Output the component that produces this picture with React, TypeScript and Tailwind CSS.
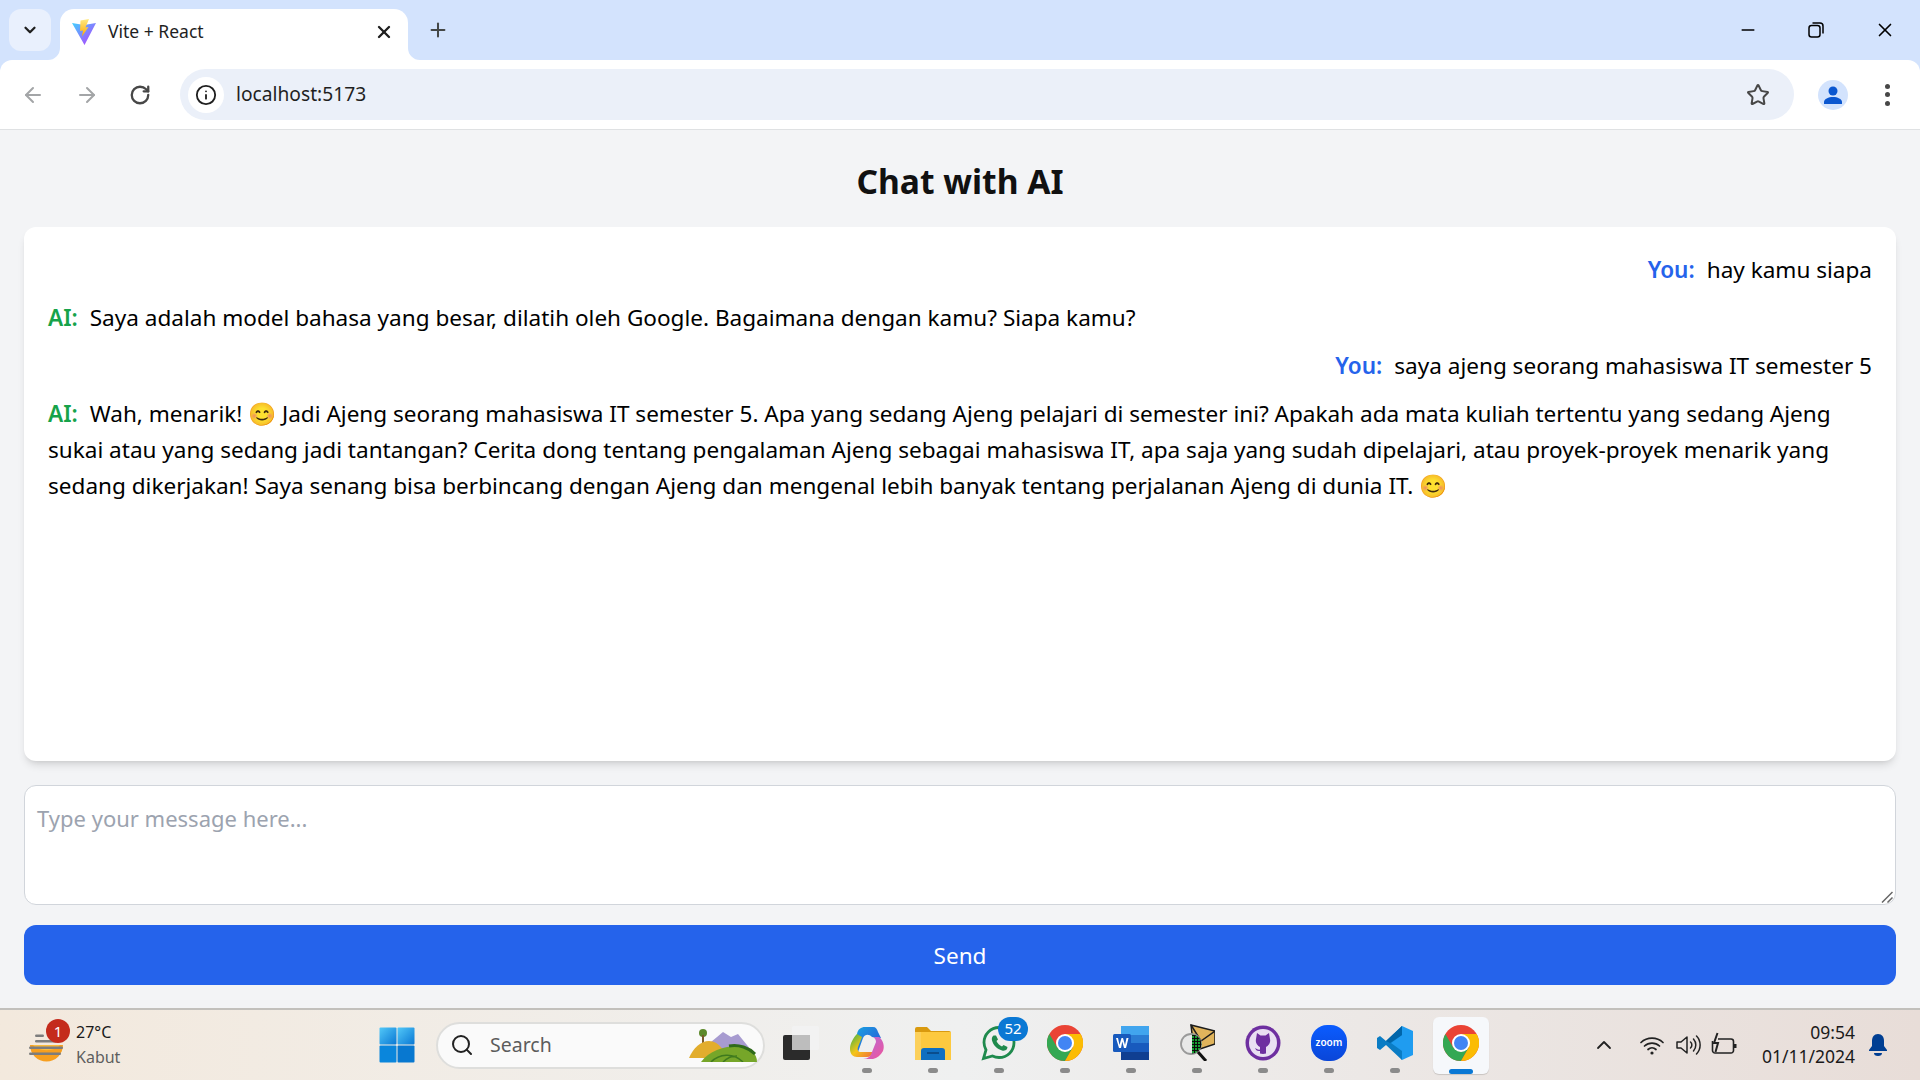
import React from "react";
import { X, Plus, ChevronDown, ArrowLeft, ArrowRight, RotateCw, Info, Star, Search, Minus, ChevronUp } from "lucide-react";

const uiFont = "font-['Noto_Sans',sans-serif]";

function ViteLogo() {
  return (
    <svg width="24" height="28" viewBox="0 0 24 28" className="shrink-0">
      <defs>
        <linearGradient id="viteA" x1="0" y1="0" x2="1" y2="1">
          <stop offset="0" stopColor="#41d1ff" />
          <stop offset="1" stopColor="#bd34fe" />
        </linearGradient>
        <linearGradient id="viteB" x1="0" y1="0" x2="0" y2="1">
          <stop offset="0" stopColor="#ffea83" />
          <stop offset="1" stopColor="#ffa800" />
        </linearGradient>
      </defs>
      <path d="M0 5L12 7L24 5L12.500 27Z" fill="url(#viteA)" />
      <path d="M17 1L8.500 2.500L8 13L11 12.500L10 18.500L16.500 9L13.500 9.500Z" fill="url(#viteB)" />
    </svg>
  );
}

function ChromeIcon({ size = 36 }: { size?: number }) {
  return (
    <svg width={size} height={size} viewBox="0 0 36 36">
      <circle cx="18" cy="18" r="18" fill="#ea4335" />
      <path d="M2.400 9L10.200 22.500L18 27L25.800 22.500L18 36A18 18 0 0 1 2.400 9Z" fill="#34a853" />
      <path d="M18 9H33.600A18 18 0 0 1 18 36L25.800 22.500Z" fill="#fbbc04" />
      <circle cx="18" cy="18" r="9" fill="#fff" />
      <circle cx="18" cy="18" r="7" fill="#4285f4" />
    </svg>
  );
}

function WindowsLogo() {
  return (
    <svg width="36" height="36" viewBox="0 0 36 36" className="shrink-0">
      <defs>
        <linearGradient id="winA" x1="0" y1="0" x2="1" y2="1">
          <stop offset="0" stopColor="#52c8f8" />
          <stop offset="1" stopColor="#0a78d4" />
        </linearGradient>
      </defs>
      <rect x="0.500" y="0.500" width="17" height="17" rx="1" fill="url(#winA)" />
      <rect x="18.500" y="0.500" width="17" height="17" rx="1" fill="url(#winA)" />
      <rect x="0.500" y="18.500" width="17" height="17" rx="1" fill="#0a86dc" />
      <rect x="18.500" y="18.500" width="17" height="17" rx="1" fill="#0878d0" />
    </svg>
  );
}

function TaskIcon({ children, dot = true, active = false }: { children: React.ReactNode; dot?: boolean; active?: boolean }) {
  return (
    <div className="relative flex h-[57px] w-[66px] shrink-0 items-center justify-center pb-[5px]">
      {active && <span className="absolute inset-y-0 left-[5px] w-[56px] rounded-md bg-[#f6f8fb] shadow-[0_1px_1px_rgba(0,0,0,0.15)]" />}
      <div className="relative flex">{children}</div>
      {dot && !active && <span className="absolute bottom-[1px] left-[28px] h-[5px] w-[10px] rounded-full bg-[#8b8b8b]" />}
      {active && <span className="absolute bottom-0 left-[21px] h-[5px] w-[24px] rounded-full bg-[#0a78d4]" />}
    </div>
  );
}

function BrowserChrome() {
  return (
    <header className={`shrink-0 bg-[#d3e3fd] ${uiFont}`}>
      <div className="flex h-[60px] items-end">
        <div className="mb-[9px] ml-[9px] flex h-[42px] w-[42px] items-center justify-center rounded-[12px] bg-[#e9f0fd]">
          <ChevronDown size={18} strokeWidth={3} className="text-[#1f1f1f]" />
        </div>
        <div className="relative ml-[9px] flex h-[51px] w-[348px] items-center rounded-t-[14px] bg-white pb-[6px] pl-[12px] pr-[14px]">
          <svg width="12" height="12" viewBox="0 0 12 12" className="absolute bottom-0 left-[-12px]">
            <path d="M12 0A12 12 0 0 1 0 12H12Z" fill="#fff" />
          </svg>
          <svg width="12" height="12" viewBox="0 0 12 12" className="absolute bottom-0 right-[-12px]">
            <path d="M0 0A12 12 0 0 0 12 12H0Z" fill="#fff" />
          </svg>
          <ViteLogo />
          <span className="ml-[12px] flex-1 text-[17.500px] text-[#1f1f1f]">Vite + React</span>
          <X size={20} strokeWidth={2.800} className="text-[#1f1f1f]" />
        </div>
        <div className="mb-[19px] ml-[19px] flex h-[22px] w-[22px] items-center justify-center">
          <Plus size={24} strokeWidth={2.200} className="text-[#444746]" />
        </div>
        <div className="mb-[19px] ml-auto flex items-center gap-[50px] pr-[24px] text-black">
          <Minus size={20} strokeWidth={1.800} />
          <svg width="16" height="16" viewBox="0 0 16 16" fill="none" stroke="currentColor" strokeWidth="1.500">
            <rect x="1" y="3.500" width="11" height="11.500" rx="2.500" />
            <path d="M4.500 1h7.500a3 3 0 0 1 3 3v7.500" />
          </svg>
          <X size={22} strokeWidth={1.800} />
        </div>
      </div>
      <div className="flex h-[70px] items-center rounded-t-[12px] border-b border-[#dfe1e3] bg-white pr-[30px]">
        <div className="flex items-center gap-[30px] pl-[21px] text-[#a3a5a7]">
          <ArrowLeft size={24} strokeWidth={2} />
          <ArrowRight size={24} strokeWidth={2} />
          <RotateCw size={22} strokeWidth={2.500} className="text-[#474747]" />
        </div>
        <div className="ml-[29px] flex h-[51px] flex-1 items-center rounded-full bg-[#ebf0f9] pl-[8px] pr-[24px]">
          <div className="flex h-[36px] w-[36px] items-center justify-center rounded-full bg-white">
            <Info size={22} strokeWidth={2} className="text-[#1f1f1f]" />
          </div>
          <span className="ml-[12px] flex-1 text-[19.200px] text-[#1f1f1f]">localhost:5173</span>
          <Star size={24} strokeWidth={2} className="text-[#474747]" />
        </div>
        <div className="ml-[24px] flex h-[30px] w-[30px] items-center justify-center rounded-full bg-[#d3e3fd]">
          <svg width="20" height="20" viewBox="0 0 20 20" fill="#0b57d0">
            <circle cx="10" cy="6" r="4.500" />
            <path d="M1 19v-2c0-3 4.500-5 9-5s9 2 9 5v2Z" />
          </svg>
        </div>
        <div className="ml-[37px] flex flex-col gap-[3.500px]">
          <span className="h-[5px] w-[5px] rounded-full bg-[#474747]" />
          <span className="h-[5px] w-[5px] rounded-full bg-[#474747]" />
          <span className="h-[5px] w-[5px] rounded-full bg-[#474747]" />
        </div>
      </div>
    </header>
  );
}

function Taskbar() {
  return (
    <footer className={`flex h-[72px] shrink-0 items-center border-t-2 border-[#c2c0bc] bg-gradient-to-r from-[#f3e9dd] via-[#eff0f0] to-[#e8ddd8] ${uiFont}`}>
      <div className="relative flex w-[379px] shrink-0 items-center pl-[29px]">
        <svg width="36" height="28" viewBox="0 0 36 28" className="mt-[6px] shrink-0">
          <path d="M1 11h33a16.500 16.500 0 0 1-33 0Z" fill="#f79f1f" />
          <path d="M4 11h27a14 7 0 0 1-27 0Z" fill="#fbbb3c" />
          <g fill="#7d7d7d">
            <rect x="6" y="0.500" width="9" height="2.500" rx="1.200" />
            <rect x="6" y="6" width="22" height="2.500" rx="1.200" />
            <rect x="0" y="12.500" width="34" height="2.500" rx="1.200" />
            <rect x="0" y="18.500" width="32" height="2.500" rx="1.200" />
          </g>
        </svg>
        <span className="absolute left-[46px] top-[-1px] flex h-[24px] w-[24px] items-center justify-center rounded-full bg-[#c42b1c] text-[15px] text-white">1</span>
        <div className="ml-[11px] leading-[25px]">
          <div className="text-[16px] text-[#1a1a1a]">27°C</div>
          <div className="text-[16px] text-[#5e5e5e]">Kabut</div>
        </div>
      </div>
      <WindowsLogo />
      <div className="ml-[21px] flex h-[47px] w-[329px] shrink-0 items-center rounded-full border-2 border-[#dededc] bg-[#fafafa] pl-[12px] pr-[6px]">
        <Search size={24} strokeWidth={2} className="text-[#222]" />
        <span className="ml-[16px] flex-1 text-[19.500px] text-[#5c5c5c]">Search</span>
        <svg width="68" height="34" viewBox="0 0 68 34">
          <path d="M22 14L34 4L42 9L49 6L62 22H22Z" fill="#a79bd0" />
          <circle cx="14" cy="5" r="4" fill="#5d8a2b" />
          <rect x="13" y="7" width="2" height="8" fill="#7a5a2a" />
          <path d="M0 30C4 20 12 13 20 13C30 13 36 24 38 30Z" fill="#e2ad2d" />
          <path d="M12 34C20 22 38 17 52 18C62 20 68 26 68 34Z" fill="#76a629" />
          <path d="M40 18C50 16 60 20 66 26" stroke="#2f6b1a" strokeWidth="3" fill="none" />
          <path d="M22 34C30 26 44 24 54 34M34 34C38 30 44 28 48 28" stroke="#3f7a1e" strokeWidth="1.500" fill="none" />
        </svg>
      </div>
      <div className="ml-[3px] flex items-center">
        <TaskIcon dot={false}>
          <svg width="36" height="34" viewBox="0 0 36 34">
            <rect x="0" y="9" width="27" height="25" rx="2" fill="#2b2b2b" />
            <rect x="9" y="0" width="27" height="24" rx="2" fill="#f2f2f2" />
            <rect x="9" y="9" width="18" height="15" fill="#bdbdbd" />
          </svg>
        </TaskIcon>
        <TaskIcon>
          <svg width="36" height="34" viewBox="0 0 36 34">
            <defs>
              <linearGradient id="copA" x1="0" y1="0" x2="1" y2="1">
                <stop offset="0" stopColor="#19a3e0" />
                <stop offset="1" stopColor="#2c4fd8" />
              </linearGradient>
              <linearGradient id="copB" x1="0" y1="0" x2="1" y2="1">
                <stop offset="0" stopColor="#37b34a" />
                <stop offset="0.500" stopColor="#f5c518" />
                <stop offset="1" stopColor="#ef6c3a" />
              </linearGradient>
              <linearGradient id="copC" x1="0" y1="0" x2="1" y2="1">
                <stop offset="0" stopColor="#b06be0" />
                <stop offset="1" stopColor="#f0569a" />
              </linearGradient>
            </defs>
            <path d="M8 8C9 3 12 1 16 1H24C27 1 28 3 29 6L32 12L23 11C20 8 16 8 14 12L9 26C6 22 6 15 8 8Z" fill="url(#copA)" />
            <path d="M8 8C4 12 1 18 1 23C1 28 4 31 8 31H18C21 31 23 29 24 26L12 26C9 26 8 24 9 21L13 11Z" fill="url(#copB)" />
            <path d="M23 11L30 11C34 14 36 20 34 25C32 29 28 32 24 33H14C19 33 22 30 23 26L27 16C27 13 25 11 23 11Z" fill="url(#copC)" />
          </svg>
        </TaskIcon>
        <TaskIcon>
          <svg width="36" height="34" viewBox="0 0 36 34">
            <path d="M0 3a2 2 0 0 1 2-2h10l4 4h18a2 2 0 0 1 2 2v6H0Z" fill="#d99a0f" />
            <path d="M0 6h36v28H0Z" fill="#fcd05a" />
            <path d="M6 34V6h30v28Z" fill="#fdc93f" />
            <path d="M6 25a3 3 0 0 1 3-3h18a3 3 0 0 1 3 3v9H6Z" fill="#0f6fc0" />
            <rect x="12" y="26" width="12" height="2" fill="#0a4d8c" />
          </svg>
        </TaskIcon>
        <TaskIcon>
          <div className="relative">
            <svg width="36" height="36" viewBox="0 0 36 36" className="block">
              <path d="M18 2.500C9.500 2.500 3 9.500 3 17.500c0 3 1 5.500 2 7.500L2.500 33.500l9-2.500c2 1 4.500 1.500 6.500 1.500 8.500 0 15-6.500 15-15S26.500 2.500 18 2.500Z" fill="none" stroke="#1f8a4d" strokeWidth="2.800" />
              <path d="M12.500 10.500c-1.500 1-2 3-1.500 5 1.500 5 5 8.500 10 10 2 .5 4 0 5-1.500l.5-2-4-2-1.500 1.500c-2.500-1-4.500-3-5.500-5.500l1.500-1.500-2-4Z" fill="#1f8a4d" />
            </svg>
            <span className="absolute left-[17px] top-[-8px] flex h-[24px] w-[30px] items-center justify-center rounded-full bg-[#0a78d4] text-[15px] text-white">52</span>
          </div>
        </TaskIcon>
        <TaskIcon><ChromeIcon /></TaskIcon>
        <TaskIcon>
          <svg width="36" height="34" viewBox="0 0 36 34">
            <rect x="8" y="0" width="28" height="34" rx="2" fill="#2b7cd3" />
            <rect x="8" y="0" width="28" height="9" fill="#41a5ee" />
            <rect x="8" y="17" width="28" height="9" fill="#185abd" />
            <rect x="8" y="26" width="28" height="8" fill="#103f91" />
            <rect x="0" y="8" width="18" height="18" rx="1.500" fill="#185abd" />
            <path d="M3 12h2l1.500 7 2-7h1.500l2 7 1.500-7h2l-2.500 10h-2l-1.700-6.500L8 22h-2Z" fill="#fff" />
          </svg>
        </TaskIcon>
        <TaskIcon>
          <svg width="35" height="37" viewBox="0 0 35 37">
            <defs>
              <pattern id="mailGrid" width="3" height="3" patternUnits="userSpaceOnUse">
                <rect width="3" height="3" fill="#0c0c0c" />
                <rect width="2" height="2" fill="#18a032" />
              </pattern>
            </defs>
            <path d="M11 1L35 7V20L14 27Z" fill="#e0b45c" stroke="#1c1c1c" strokeWidth="1.500" />
            <path d="M11 1L21 17L35 7" fill="none" stroke="#1c1c1c" strokeWidth="1.500" />
            <circle cx="11" cy="20" r="10" fill="#e8e8e8" stroke="#9a9a9a" strokeWidth="1.800" />
            <path d="M12 10.500a9.500 9.500 0 0 1 0 19Z" fill="url(#mailGrid)" />
            <path d="M18 28L26 37" stroke="#111" strokeWidth="3" />
          </svg>
        </TaskIcon>
        <TaskIcon>
          <svg width="36" height="36" viewBox="0 0 36 36">
            <circle cx="18" cy="18" r="17.500" fill="#6e2fa0" />
            <circle cx="18" cy="18" r="14" fill="#e9dff2" />
            <path d="M12 8l3.500 2.500h5L24 8l1 6c1 4-2 7-4 8v6.500a10.500 10.500 0 0 1-6 0V26c-3 .5-4-1-5-3 1.500.5 3 2.500 5 1.500V22c-2-1-5-4-4-8Z" fill="#6e2fa0" />
          </svg>
        </TaskIcon>
        <TaskIcon>
          <div className="flex h-[36px] w-[36px] items-center justify-center rounded-[45%] bg-gradient-to-b from-[#0b5cff] to-[#0a46d8] text-[10px] font-semibold text-white">zoom</div>
        </TaskIcon>
        <TaskIcon>
          <svg width="36" height="36" viewBox="0 0 36 36">
            <path d="M25 1L36 6V30L25 35L13 18Z" fill="#1f9cf0" />
            <path d="M25 1V10L14 18L25 26V35L9 20L3 25L0 23V13L3 11L9 16Z" fill="#0a7cc4" />
            <path d="M25 1L9 16L13 18L25 10Z" fill="#0065a9" />
          </svg>
        </TaskIcon>
        <TaskIcon active><ChromeIcon /></TaskIcon>
      </div>
      <div className="ml-auto flex items-center pr-[32px] text-[#222]">
        <ChevronUp size={24} strokeWidth={1.800} />
        <svg width="26" height="26" viewBox="0 0 26 26" fill="none" stroke="#222" strokeWidth="1.700" strokeLinecap="round" className="ml-[23px]">
          <path d="M2 10.500a16 16 0 0 1 22 0" />
          <path d="M5.500 14a11 11 0 0 1 15 0" />
          <path d="M9 17.500a6 6 0 0 1 8 0" />
          <circle cx="13" cy="21" r="1.600" fill="#222" stroke="none" />
        </svg>
        <svg width="26" height="26" viewBox="0 0 26 26" fill="none" stroke="#222" strokeWidth="1.500" strokeLinecap="round" strokeLinejoin="round" className="ml-[10px]">
          <path d="M2 10v6h4l6 5V5L6 10Z" />
          <path d="M15.500 10a4 4 0 0 1 0 6" />
          <path d="M18.500 7a9 9 0 0 1 0 12" />
          <path d="M21.500 4a13 13 0 0 1 0 18" />
        </svg>
        <svg width="26" height="26" viewBox="0 0 26 26" fill="none" stroke="#222" strokeWidth="1.600" className="ml-[10px]">
          <path d="M7 7H20a2.500 2.500 0 0 1 2.500 2.500v9a2.500 2.500 0 0 1-2.500 2.500H4a2.500 2.500 0 0 1-2.500-2.500V9" />
          <rect x="23" y="12" width="2.500" height="4" fill="#222" stroke="none" />
          <path d="M6.500 1L3 11h4L4.500 20" strokeWidth="2" />
        </svg>
        <div className="mb-[3px] ml-[25px] text-right text-[17.500px] leading-[24px] text-[#1a1a1a]">
          <div>09:54</div>
          <div>01/11/2024</div>
        </div>
        <svg width="20" height="24" viewBox="0 0 20 24" fill="#003e92" className="ml-[13px]">
          <path d="M10 1c-4 0-6 3-6 7v5l-3 4v1h18v-1l-3-4V8c0-4-2-7-6-7Z" />
          <path d="M6 20h8a4 3 0 0 1-8 0Z" />
        </svg>
      </div>
    </footer>
  );
}

function YouRow({ text }: { text: string }) {
  return (
    <div className="mb-[12px] text-right">
      <span className="mr-[12px] font-semibold text-[#2563eb]">You:</span>
      {text}
    </div>
  );
}

function AiRow({ children }: { children: React.ReactNode }) {
  return (
    <div className="mb-[12px]">
      <span className="mr-[12px] font-semibold text-[#16a34a]">AI:</span>
      {children}
    </div>
  );
}

export default function App() {
  return (
    <div className="flex h-screen w-full flex-col overflow-hidden bg-[#f3f4f6]">
      <BrowserChrome />
      <main className={`flex min-h-0 flex-1 flex-col px-[24px] pb-[23px] pt-[24px] ${uiFont}`}>
        <h1 className="mb-[19px] text-center text-[33.600px] font-bold leading-[54px] text-[#111]">Chat with AI</h1>
        <div className="min-h-0 flex-1 rounded-[12px] bg-white px-[24px] pb-[24px] pt-[25px] text-[22.560px] leading-[36px] text-black shadow-[0_6px_9px_-2px_rgba(0,0,0,0.12),0_3px_5px_-3px_rgba(0,0,0,0.1)]">
          <YouRow text="hay kamu siapa" />
          <AiRow>Saya adalah model bahasa yang besar, dilatih oleh Google. Bagaimana dengan kamu? Siapa kamu?</AiRow>
          <YouRow text="saya ajeng seorang mahasiswa IT semester 5" />
          <AiRow>Wah, menarik! 😊 Jadi Ajeng seorang mahasiswa IT semester 5. Apa yang sedang Ajeng pelajari di semester ini? Apakah ada mata kuliah tertentu yang sedang Ajeng sukai atau yang sedang jadi tantangan? Cerita dong tentang pengalaman Ajeng sebagai mahasiswa IT, apa saja yang sudah dipelajari, atau proyek-proyek menarik yang sedang dikerjakan! Saya senang bisa berbincang dengan Ajeng dan mengenal lebih banyak tentang perjalanan Ajeng di dunia IT. 😊</AiRow>
        </div>
        <div className="relative mt-[24px] h-[120px] shrink-0">
          <textarea
            placeholder="Type your message here..."
            className="h-full w-full resize-none rounded-[12px] border border-[#d1d5db] bg-white px-[12px] py-[14px] text-[22px] leading-[36px] placeholder:text-[#9ca3af]"
          />
          <svg width="12" height="12" viewBox="0 0 12 12" stroke="#666" strokeWidth="1.500" className="absolute bottom-[2px] right-[3px]">
            <path d="M1 11.500L11.500 1M6.500 11.500L11.500 6.500" />
          </svg>
        </div>
        <button className="mt-[20px] h-[60px] w-full shrink-0 rounded-[12px] bg-[#2563eb] pt-[2px] text-[22.560px] text-white">Send</button>
      </main>
      <Taskbar />
    </div>
  );
}
